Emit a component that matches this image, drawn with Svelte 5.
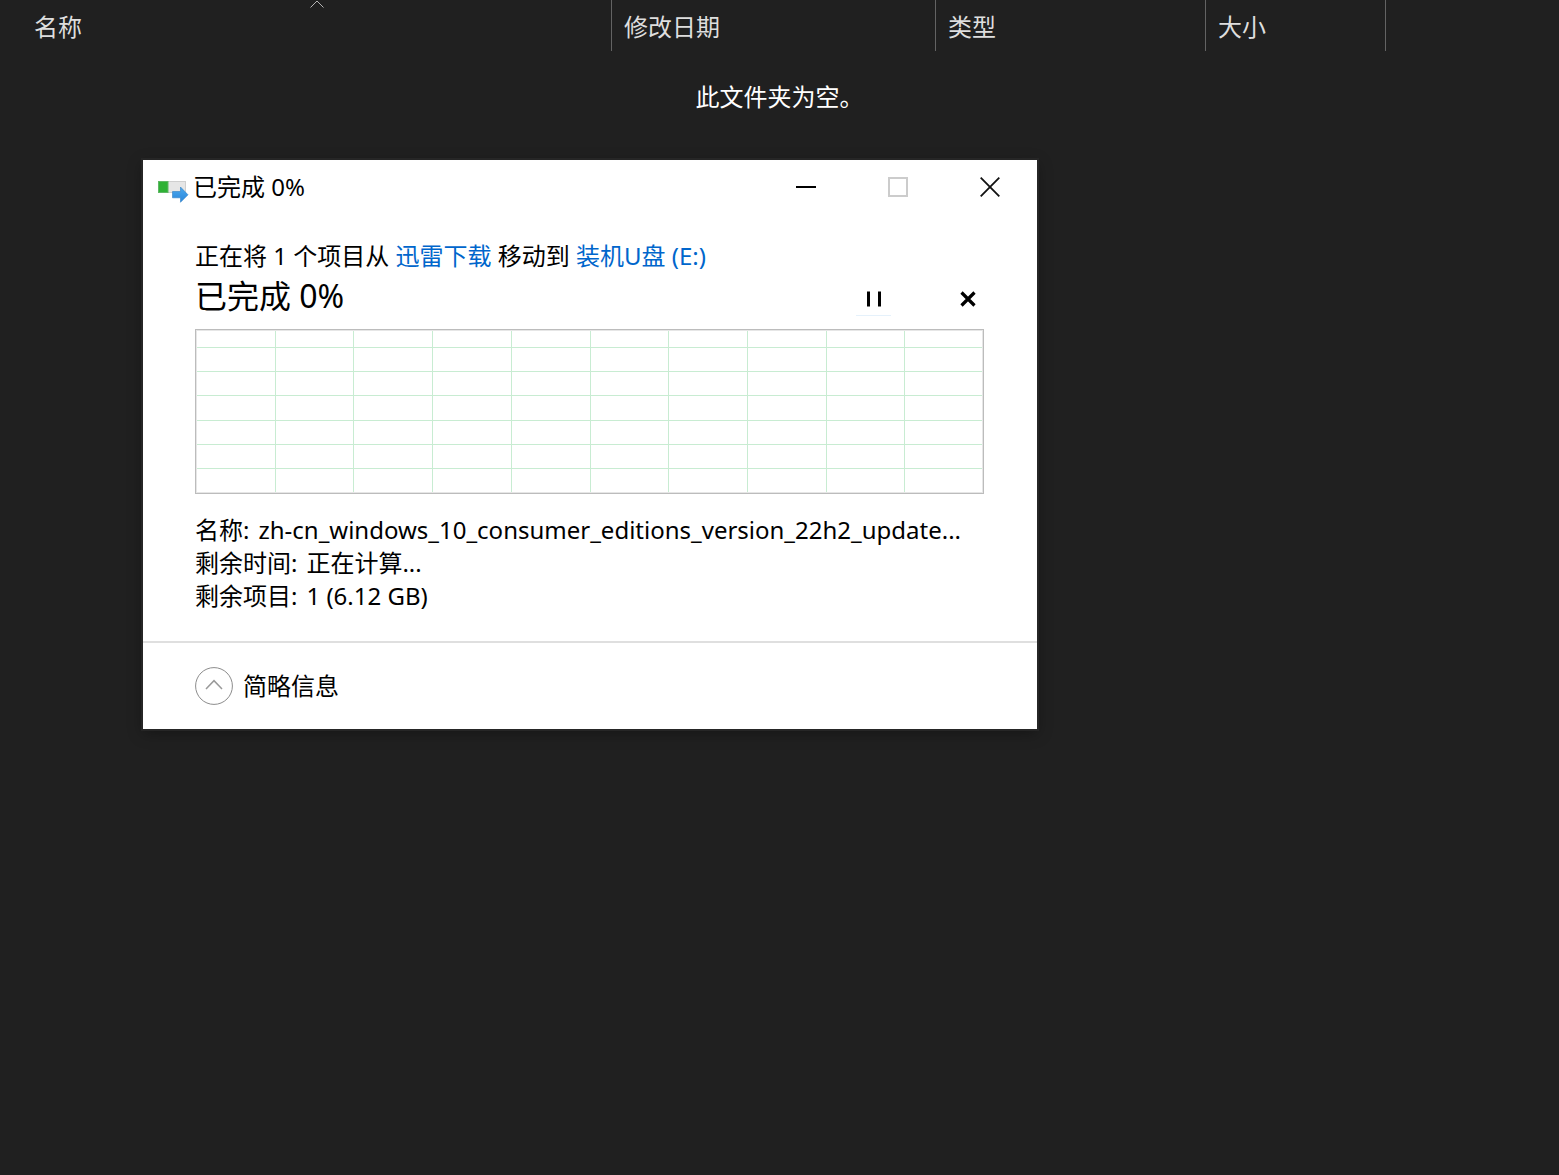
<script>
  const columns = [
    { key: 'name', label: '名称', sorted: true },
    { key: 'date', label: '修改日期' },
    { key: 'type', label: '类型' },
    { key: 'size', label: '大小' }
  ];

  const details = [
    { label: '名称:', value: 'zh-cn_windows_10_consumer_editions_version_22h2_update...' },
    { label: '剩余时间:', value: '正在计算...' },
    { label: '剩余项目:', value: '1 (6.12 GB)' }
  ];

  const gridX = [80, 158, 237, 316, 395, 473, 552, 631, 709];
  const gridY = [18, 42, 66, 91, 115, 139];
</script>

<main class="explorer">
  <table class="files">
    <thead>
      <tr>
        {#each columns as col}
          <th class={col.key} scope="col" aria-sort={col.sorted ? 'ascending' : undefined}>
            <button class="sort" type="button">
              {col.label}
              {#if col.sorted}
                <svg class="caret" width="14" height="8" viewBox="0 0 14 8" aria-hidden="true">
                  <path d="M.5 7.5 7 1l6.500 6.500" fill="none" stroke="#b4b4b4" />
                </svg>
              {/if}
            </button>
          </th>
        {/each}
        <td class="rest"></td>
      </tr>
    </thead>
    <tbody>
      <tr><td class="empty" colspan="5">此文件夹为空。</td></tr>
    </tbody>
  </table>

  <div class="dialog" role="dialog" aria-labelledby="dialog-title">
    <header class="titlebar">
      <svg class="app-icon" width="31" height="22" viewBox="0 0 31 22" aria-hidden="true">
        <defs>
          <linearGradient id="arrow" x1="0" y1="0" x2="0" y2="1">
            <stop offset="0" stop-color="#4aa8ee" />
            <stop offset="1" stop-color="#2a86da" />
          </linearGradient>
        </defs>
        <rect x=".5" y=".5" width="27" height="11" fill="#e6e6e6" stroke="#cfcfcf" />
        <rect x=".5" y=".5" width="9.500" height="11" fill="#2fb135" stroke="#5fb765" />
        <path d="M14.500 10.500h8V6l7.500 7.800-7.500 7.500v-4.500h-8z" fill="url(#arrow)" stroke="#2f80c4" stroke-width=".6" />
      </svg>
      <span class="title" id="dialog-title">已完成 0%</span>
      <div class="window-controls">
        <button type="button" aria-label="最小化">
          <svg width="20" height="20" viewBox="0 0 20 20"><path d="M0 10h20" stroke="#000" stroke-width="2" /></svg>
        </button>
        <button type="button" aria-label="最大化" disabled>
          <svg width="20" height="20" viewBox="0 0 20 20"><path d="M1 1h18v18H1z" fill="none" stroke="#ccc" stroke-width="2" /></svg>
        </button>
        <button type="button" aria-label="关闭">
          <svg width="20" height="20" viewBox="0 0 20 20"><path d="M.7.700 19.300 19.300M19.300.700.700 19.300" stroke="#111" stroke-width="1.800" /></svg>
        </button>
      </div>
    </header>

    <section class="body">
      <p class="summary">正在将 1 个项目从 <a href="#source">迅雷下载</a> 移动到 <a href="#target">装机U盘 (E:)</a></p>
      <div class="progress">
        <h1>已完成 0%</h1>
        <div class="actions">
          <button class="pause" type="button" aria-label="暂停">
            <svg width="16" height="16" viewBox="0 0 16 16"><path d="M2.500 .5v15M13.500 .5v15" stroke="#000" stroke-width="3" /></svg>
          </button>
          <button type="button" aria-label="取消">
            <svg width="16" height="16" viewBox="0 0 16 16"><path d="M1.500 1.500l13 13M14.500 1.500l-13 13" stroke="#000" stroke-width="3.200" /></svg>
          </button>
        </div>
      </div>

      <svg class="chart" viewBox="0 0 789 165" role="img" aria-label="传输速度" shape-rendering="crispEdges">
        {#each gridY as y}
          <path d="M2 {y + 0.5}H787" stroke="#c8ecd2" />
        {/each}
        {#each gridX as x}
          <path d="M{x + 0.5} 2V163" stroke="#c8ecd2" />
        {/each}
        <rect x="1.500" y="1.500" width="786" height="162" fill="none" stroke="#e6e6e6" />
        <rect x=".5" y=".5" width="788" height="164" fill="none" stroke="#bcbcbc" />
      </svg>

      <dl class="details">
        {#each details as item}
          <div class="detail">
            <dt>{item.label}</dt>
            <dd>{item.value}</dd>
          </div>
        {/each}
      </dl>
    </section>

    <footer class="footer">
      <button class="toggle" type="button" aria-expanded="true">
        <svg width="38" height="38" viewBox="0 0 38 38" aria-hidden="true">
          <circle cx="19" cy="19" r="18.400" fill="none" stroke="#8c8c8c" />
          <path d="M11 22l8-8.300 8 8.300" fill="none" stroke="#999" stroke-width="1.500" />
        </svg>
        <span class="toggle-label">简略信息</span>
      </button>
    </footer>
  </div>
</main>

<style>
  :global(body) {
    margin: 0;
    background: #202020;
  }

  .explorer {
    position: relative;
    min-height: 100vh;
    background: #202020;
    color: #fff;
    font-family: 'Noto Sans', 'Noto Sans CJK SC', sans-serif;
    font-size: 24px;
    line-height: 33px;
  }

  button {
    padding: 0;
    border: 0;
    background: none;
    color: inherit;
    font: inherit;
  }

  .files {
    width: 100%;
    table-layout: fixed;
    border-collapse: separate;
    border-spacing: 0;
  }

  th {
    box-sizing: border-box;
    height: 51px;
    padding: 0;
    border-right: 1px solid #636363;
    color: #dedede;
    font-weight: 400;
  }

  .name { width: 612px; }
  .date { width: 324px; }
  .type { width: 270px; }
  .size { width: 180px; }

  .sort {
    position: relative;
    display: block;
    width: 100%;
    height: 51px;
    padding: 2px 0 0 12px;
    text-align: left;
  }

  .name .sort { padding-left: 34px; }

  .caret {
    position: absolute;
    top: 0;
    left: calc(50% + 4px);
  }

  .empty {
    padding: 29px 0;
    text-align: center;
  }

  .dialog {
    position: absolute;
    top: 160px;
    left: 143px;
    width: 894px;
    background: #fff;
    color: #000;
    box-shadow: 0 0 0 2px #262626, 0 4px 14px rgba(0, 0, 0, 0.35);
  }

  .titlebar {
    display: flex;
    align-items: center;
    height: 54px;
    padding: 0 1px 0 15px;
  }

  .app-icon {
    margin: 10px 4px 0 0;
  }

  .title {
    flex: 1;
    padding-bottom: 2px;
  }

  .window-controls {
    display: flex;
    height: 100%;
  }

  .window-controls button {
    display: grid;
    place-items: center;
    width: 92px;
  }

  .body {
    padding: 25px 53px 29px 52px;
  }

  .summary { margin: 0; }

  a {
    color: #0066cc;
    text-decoration: none;
  }

  .progress {
    display: flex;
    align-items: flex-end;
    justify-content: space-between;
    height: 47px;
    margin-bottom: 10px;
  }

  h1 {
    margin: 0;
    font-size: 32px;
    font-weight: 400;
    line-height: 46px;
  }

  .actions {
    display: flex;
    gap: 59px;
    margin: 0 -1px 3px 0;
  }

  .actions button {
    display: grid;
    place-items: center;
    width: 35px;
    height: 34px;
    border-bottom: 1px solid transparent;
  }

  .actions .pause { border-color: #e5f1fb; }

  .chart {
    display: block;
    width: 100%;
  }

  .details { margin: 19px 0 0; }

  .detail {
    display: flex;
    gap: 9px;
    white-space: nowrap;
  }

  dd { margin: 0; }

  .footer {
    display: flex;
    align-items: center;
    height: 86px;
    padding: 0 52px;
    border-top: 2px solid #dfdfdf;
  }

  .toggle {
    display: flex;
    align-items: center;
    gap: 10px;
  }

  .toggle-label { padding-bottom: 2px; }
</style>
